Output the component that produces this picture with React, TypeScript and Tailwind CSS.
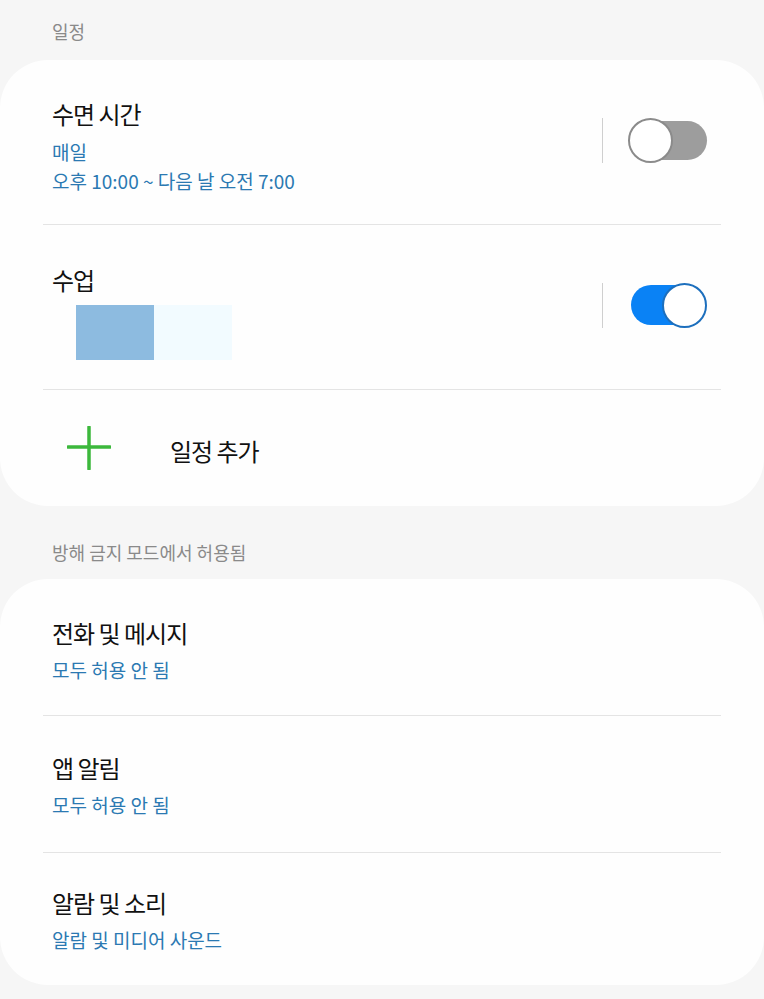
import type { ReactNode } from "react";

function Toggle({ on }: { on: boolean }) {
  return (
    <div className="relative w-[79px] h-[45px]">
      {on ? (
        <>
          <div className="absolute left-[3px] right-[2px] top-[2px] bottom-[3px] rounded-full bg-[#0a82f5]" />
          <div className="absolute right-0 top-0 w-[45px] h-[45px] rounded-full bg-white border-2 border-[#1d6fbd]" />
        </>
      ) : (
        <>
          <div className="absolute left-[4px] right-0 top-[3px] bottom-[3px] rounded-full bg-[#9d9d9d]" />
          <div className="absolute left-0 top-0 w-[45px] h-[45px] rounded-full bg-white border-2 border-[#8b8b8b]" />
        </>
      )}
    </div>
  );
}

function SwitchGroup({ on }: { on: boolean }) {
  return (
    <div className="flex items-center gap-[25px] mb-[3px]">
      <div className="w-px h-[45px] bg-[#cfcfcf]" />
      <Toggle on={on} />
    </div>
  );
}

function Title({ children }: { children: ReactNode }) {
  return (
    <div className="text-[24px] leading-[36px] tracking-[-1px] text-[#111111]">
      {children}
    </div>
  );
}

function Sub({ children, className = "" }: { children: ReactNode; className?: string }) {
  return (
    <div className={`text-[19px] leading-[29px] text-[#2b79b2] ${className}`}>
      {children}
    </div>
  );
}

function Divider() {
  return <div className="mx-[43px] h-px bg-[#e4e4e4]" />;
}

function SectionHeader({ children, className = "" }: { children: ReactNode; className?: string }) {
  return (
    <div className={`flex items-center pl-[52px] text-[18px] text-[#8a8a8a] ${className}`}>
      {children}
    </div>
  );
}

export default function App() {
  return (
    <div className="w-[764px] h-[999px] overflow-hidden bg-[#f6f6f6] font-['Noto_Sans_CJK_KR','Noto_Sans',sans-serif]">
      <SectionHeader className="h-[60px] pt-[2px]">일정</SectionHeader>

      <div className="rounded-[48px] bg-[#fefefe]">
        <div className="flex items-center pl-[52px] pr-[57px] h-[164px]">
          <div className="flex-1 pt-[7px]">
            <Title>수면 시간</Title>
            <Sub className="mt-[5px]">매일</Sub>
            <Sub>오후 10:00 ~ 다음 날 오전 7:00</Sub>
          </div>
          <SwitchGroup on={false} />
        </div>
        <Divider />
        <div className="flex items-center pl-[52px] pr-[57px] h-[164px]">
          <div className="flex-1 pt-[8px]">
            <Title>수업</Title>
            <div className="mt-[7px] ml-[24px] flex">
              <div className="w-[78px] h-[55px] bg-[#8dbbe0]" />
              <div className="w-[78px] h-[55px] bg-[#f2fbff]" />
            </div>
          </div>
          <SwitchGroup on={true} />
        </div>
        <Divider />
        <div className="flex items-center h-[116px] pl-[67px]">
          <svg width="44" height="44" viewBox="0 0 44 44" className="shrink-0">
            <path d="M22 1V43M1 21H43" stroke="#3cb83c" strokeWidth="3.5" strokeLinecap="round" />
          </svg>
          <div className="ml-[59px] pt-[6px]">
            <Title>일정 추가</Title>
          </div>
        </div>
      </div>

      <SectionHeader className="h-[73px] pt-[20px]">방해 금지 모드에서 허용됨</SectionHeader>

      <div className="rounded-[48px] bg-[#fefefe]">
        <div className="pl-[52px] pt-[36px] h-[136px]">
          <Title>전화 및 메시지</Title>
          <Sub className="mt-[4px]">모두 허용 안 됨</Sub>
        </div>
        <Divider />
        <div className="pl-[52px] pt-[34px] h-[136px]">
          <Title>앱 알림</Title>
          <Sub className="mt-[4px]">모두 허용 안 됨</Sub>
        </div>
        <Divider />
        <div className="pl-[52px] pt-[32px] h-[132px]">
          <Title>알람 및 소리</Title>
          <Sub className="mt-[4px]">알람 및 미디어 사운드</Sub>
        </div>
      </div>
    </div>
  );
}
